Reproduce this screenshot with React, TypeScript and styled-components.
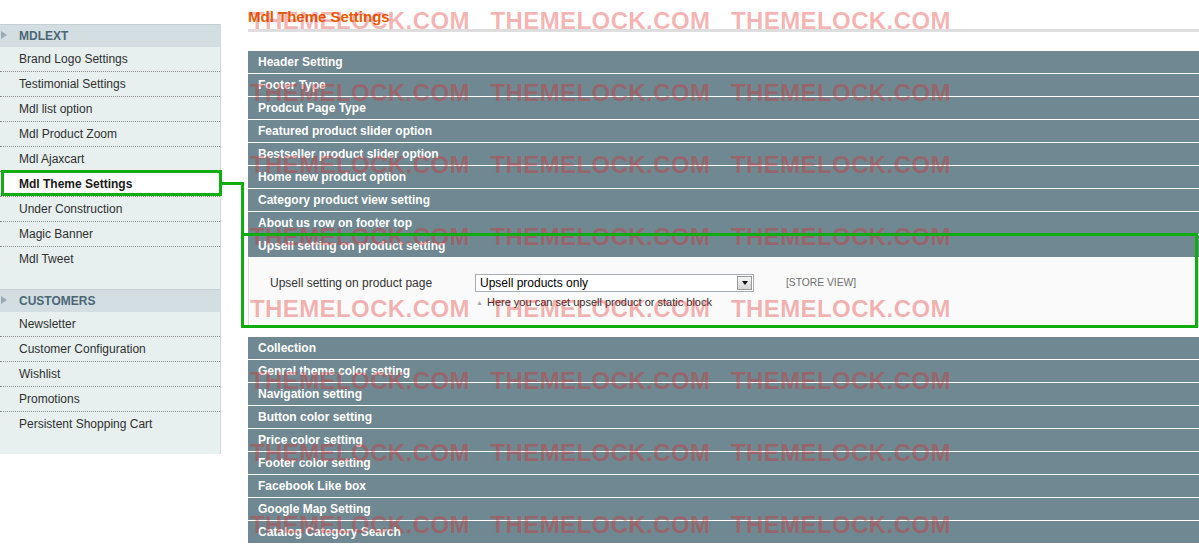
import styled, { createGlobalStyle } from "styled-components";

const GlobalStyle = createGlobalStyle`
  html, body {
    margin: 0;
    padding: 0;
    background: #ffffff;
  }
  body {
    font-family: "Liberation Sans", Arial, sans-serif;
    font-size: 12px;
    color: #2f2f2f;
  }
`;

const Page = styled.div`
  position: relative;
  display: flex;
  align-items: flex-start;
  width: 1199px;
  height: 549px;
  overflow: hidden;
`;

/* ---------- sidebar ---------- */

const Sidebar = styled.aside`
  flex: none;
  width: 221px;
  margin-top: 24px;
  padding-bottom: 17px;
  background: #e7efef;
  border-right: 1px solid #d2dada;
  box-sizing: border-box;
`;

const Group = styled.div`
  padding-bottom: 17px;
  &:last-child {
    padding-bottom: 0;
  }
`;

const GroupHeader = styled.div`
  position: relative;
  height: 22px;
  line-height: 22px;
  padding-left: 19px;
  border-top: 1px solid #c5d0d4;
  background: #d2dee2;
  color: #4b6775;
  font-weight: bold;
  font-size: 12px;
  text-transform: uppercase;

  &::before {
    content: "";
    position: absolute;
    left: 1px;
    top: 6px;
    border-left: 6px solid #9aaab2;
    border-top: 4.5px solid transparent;
    border-bottom: 4.5px solid transparent;
  }
`;

const Item = styled.div<{ $active?: boolean }>`
  height: 24px;
  line-height: 24px;
  padding-left: 19px;
  border-bottom: 1px dotted #8c8c8c;
  background: ${(p) => (p.$active ? "#ffffff" : "transparent")};
  font-weight: ${(p) => (p.$active ? "bold" : "normal")};
  color: ${(p) => (p.$active ? "#1a1a1a" : "#2f2f2f")};
  white-space: nowrap;

  &:last-child {
    border-bottom-color: transparent;
  }
`;

/* ---------- main ---------- */

const Main = styled.main`
  flex: 1;
  margin-left: 27px;
`;

const Title = styled.h3`
  margin: 0;
  padding: 8px 0 3px;
  line-height: 18px;
  font-size: 15px;
  font-weight: bold;
  color: #eb5e00;
  border-bottom: 3px solid #dedede;
`;

const Sections = styled.div`
  margin-top: 19px;
`;

const Bar = styled.div`
  height: 22px;
  line-height: 22px;
  margin-bottom: 1px;
  padding-left: 10px;
  background: #6f8891;
  color: #ffffff;
  font-weight: bold;
  font-size: 12px;
  white-space: nowrap;
`;

const Panel = styled.div`
  margin-bottom: 10px;
  padding: 16px 0 16px 21px;
  background: #fafafa;
  border: 1px solid #dcdcdc;
  border-top: none;
`;

const FieldRow = styled.div`
  display: flex;
  align-items: flex-start;
`;

const Label = styled.div`
  width: 205px;
  line-height: 18px;
  color: #333333;
`;

const FieldValue = styled.div`
  width: 279px;
`;

const SelectBox = styled.div`
  display: flex;
  align-items: center;
  justify-content: space-between;
  height: 18px;
  box-sizing: border-box;
  border: 1px solid #a5acb2;
  background: #ffffff;
  padding: 0 1px 0 4px;
  color: #000000;
`;

const SelectArrow = styled.span`
  display: flex;
  align-items: center;
  justify-content: center;
  width: 15px;
  height: 14px;
  box-sizing: border-box;
  border: 1px solid #9a9a9a;
  background: linear-gradient(#f4f4f4, #d6d6d6);

  &::after {
    content: "";
    border-top: 4px solid #111111;
    border-left: 3.5px solid transparent;
    border-right: 3.5px solid transparent;
  }
`;

const Note = styled.p`
  margin: 3px 0 0 1px;
  font-size: 11px;
  line-height: 14px;
  color: #2f2f2f;
  white-space: nowrap;

  &::before {
    content: "▲";
    display: inline-block;
    margin-right: 4px;
    font-size: 7px;
    vertical-align: 1px;
    color: #a8a8a8;
  }
`;

const Scope = styled.div`
  margin-left: 32px;
  line-height: 18px;
  font-size: 10.3px;
  color: #6f6f6f;
`;

/* ---------- overlays ---------- */

const Watermarks = styled.div`
  position: absolute;
  left: 250px;
  top: 9px;
  z-index: 2;
  display: grid;
  grid-template-columns: repeat(3, 240.5px);
  grid-auto-rows: 72px;
  pointer-events: none;
`;

const Mark = styled.span`
  font-size: 24px;
  line-height: 24px;
  font-weight: bold;
  letter-spacing: 0.4px;
  color: rgba(225, 38, 38, 0.34);
  white-space: nowrap;
`;

const Highlight = styled.div<{ $x: number; $y: number; $w: number; $h: number }>`
  position: absolute;
  left: ${(p) => p.$x}px;
  top: ${(p) => p.$y}px;
  width: ${(p) => p.$w}px;
  height: ${(p) => p.$h}px;
  box-sizing: border-box;
  border: 3px solid #10ad10;
  z-index: 3;
  pointer-events: none;
`;

const Line = styled.div<{ $x: number; $y: number; $w: number; $h: number }>`
  position: absolute;
  left: ${(p) => p.$x}px;
  top: ${(p) => p.$y}px;
  width: ${(p) => p.$w}px;
  height: ${(p) => p.$h}px;
  background: #10ad10;
  z-index: 3;
`;

const groups = [
  {
    title: "MDLEXT",
    items: [
      "Brand Logo Settings",
      "Testimonial Settings",
      "Mdl list option",
      "Mdl Product Zoom",
      "Mdl Ajaxcart",
      "Mdl Theme Settings",
      "Under Construction",
      "Magic Banner",
      "Mdl Tweet",
    ],
  },
  {
    title: "Customers",
    items: [
      "Newsletter",
      "Customer Configuration",
      "Wishlist",
      "Promotions",
      "Persistent Shopping Cart",
    ],
  },
];

const topSections = [
  "Header Setting",
  "Footer Type",
  "Prodcut Page Type",
  "Featured product slider option",
  "Bestseller product slider option",
  "Home new product option",
  "Category product view setting",
  "About us row on footer top",
];

const bottomSections = [
  "Collection",
  "Genral theme color setting",
  "Navigation setting",
  "Button color setting",
  "Price color setting",
  "Footer color setting",
  "Facebook Like box",
  "Google Map Setting",
  "Catalog Category Search",
];

const App = () => {
  const marks = Array.from({ length: 24 });

  return (
    <>
      <GlobalStyle />
      <Page>
        <Sidebar>
          {groups.map((group) => (
            <Group key={group.title}>
              <GroupHeader>{group.title}</GroupHeader>
              {group.items.map((item) => (
                <Item key={item} $active={item === "Mdl Theme Settings"}>
                  {item}
                </Item>
              ))}
            </Group>
          ))}
        </Sidebar>

        <Main>
          <Title>Mdl Theme Settings</Title>
          <Sections>
            {topSections.map((s) => (
              <Bar key={s}>{s}</Bar>
            ))}
            <Bar>Upsell setting on product setting</Bar>
            <Panel>
              <FieldRow>
                <Label>Upsell setting on product page</Label>
                <FieldValue>
                  <SelectBox>
                    <span>Upsell products only</span>
                    <SelectArrow />
                  </SelectBox>
                  <Note>Here you can set upsell product or static block</Note>
                </FieldValue>
                <Scope>[STORE VIEW]</Scope>
              </FieldRow>
            </Panel>
            {bottomSections.map((s) => (
              <Bar key={s}>{s}</Bar>
            ))}
          </Sections>
        </Main>

        <Watermarks>
          {marks.map((_, i) => (
            <Mark key={i}>THEMELOCK.COM</Mark>
          ))}
        </Watermarks>

        <Highlight $x={1} $y={170} $w={221} $h={26} />
        <Line $x={221} $y={182} $w={23} $h={3} />
        <Line $x={241} $y={182} $w={3} $h={54} />
        <Highlight $x={241} $y={233} $w={957} $h={95} />
      </Page>
    </>
  );
};

export default App;
